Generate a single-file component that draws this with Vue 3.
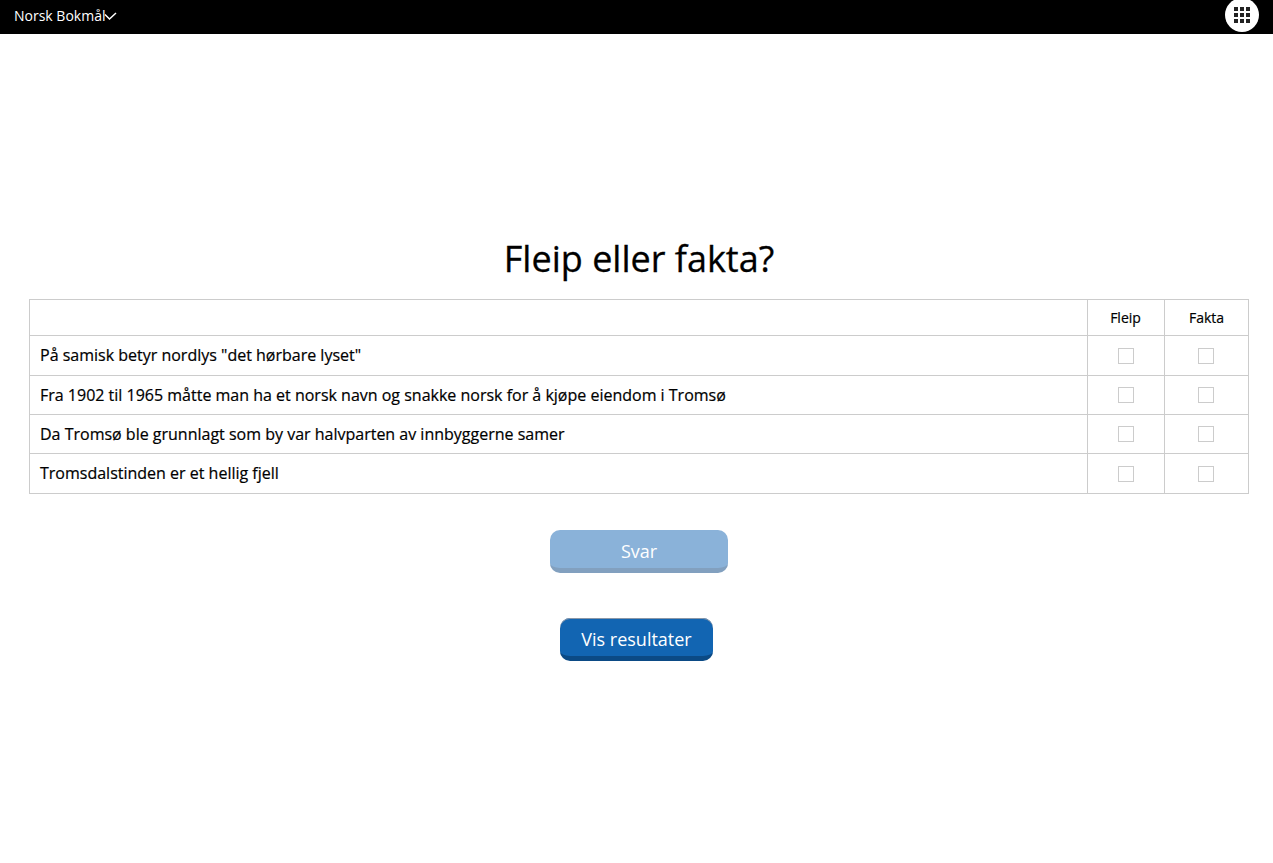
<script setup>
const rows = [
  'På samisk betyr nordlys "det hørbare lyset"',
  'Fra 1902 til 1965 måtte man ha et norsk navn og snakke norsk for å kjøpe eiendom i Tromsø',
  'Da Tromsø ble grunnlagt som by var halvparten av innbyggerne samer',
  'Tromsdalstinden er et hellig fjell'
]
</script>

<template>
  <div class="page">
    <header class="bar">
      <div class="lang">
        <span>Norsk Bokmål</span>
        <svg class="chev" width="13" height="9" viewBox="0 0 13 9"><path d="M1 2.5 L5.5 7 L12 1" fill="none" stroke="#fff" stroke-width="1.5"/></svg>
      </div>
      <div class="apps">
        <span v-for="n in 9" :key="n" class="dot"></span>
      </div>
    </header>
    <main class="main">
      <h1>Fleip eller fakta?</h1>
      <table>
        <thead>
          <tr class="head">
            <th class="q"></th>
            <th class="c1">Fleip</th>
            <th class="c2">Fakta</th>
          </tr>
        </thead>
        <tbody>
          <tr v-for="(r, i) in rows" :key="i" :class="i === 0 || i === 3 ? 'tall' : 'row'">
            <td class="q">{{ r }}</td>
            <td class="c1"><span class="box"></span></td>
            <td class="c2 boxcell"><span class="box"></span></td>
          </tr>
        </tbody>
      </table>
      <button class="btn svar">Svar</button>
      <button class="btn vis">Vis resultater</button>
    </main>
  </div>
</template>

<style>
html, body { margin: 0; background: #fff; }
</style>

<style scoped>
.page { font-family: "Open Sans", "Noto Sans", sans-serif; color: #000; min-height: 863px; }
.bar { height: 34px; background: #000; display: flex; justify-content: space-between; padding: 0 14px; }
.lang { display: flex; align-items: center; color: #fff; font-size: 14px; height: 31px; }
.chev { margin-left: -1px; margin-top: 1px; }
.apps { width: 34px; height: 34px; margin-top: -2px; border-radius: 50%; background: #fff; display: grid; grid-template-columns: repeat(3, 4px); grid-auto-rows: 4px; gap: 2px; justify-content: center; align-content: center; }
.dot { background: #222; }
.main { display: flex; flex-direction: column; align-items: center; padding-top: 200px; }
h1 { margin: 0 0 0 5px; font-size: 36px; line-height: 50px; font-weight: 400; height: 65px; -webkit-text-stroke: 0.3px #000; }
table { border-collapse: collapse; width: 1220px; margin-left: 5px; table-layout: fixed; font-size: 16px; }
th, td { border: 1px solid #ccc; padding: 0; }
th { font-size: 14px; font-weight: 400; -webkit-text-stroke: 0.2px #000; }
.head { height: 36px; }
.tall { height: 40px; }
.row { height: 39px; }
td.q { padding-left: 10px; -webkit-text-stroke: 0.2px #000; }
.tall td.q { padding-bottom: 1px; }
.c1 { width: 76px; text-align: center; }
th.c1 { width: 75px; padding-right: 1px; }
.c2 { width: 83px; text-align: center; }
.boxcell { padding-right: 1px; }
.box { display: block; width: 14px; height: 14px; border: 1px solid #ccc; margin: 0 auto; }
.btn { font-family: inherit; border: 0; color: #fff; font-size: 18px; border-radius: 10px; padding: 4px 0 0; display: block; }
.svar { width: 178px; height: 43px; margin-top: 36px; margin-left: 5px; background: #8ab2d9; border-bottom: 5px solid #82a0bf; }
.vis { width: 153px; height: 43px; margin-top: 45px; background: #1265b2; border-bottom: 5px solid #0b4a85; box-shadow: inset 0 1px 0 #8a97a8; }
</style>
